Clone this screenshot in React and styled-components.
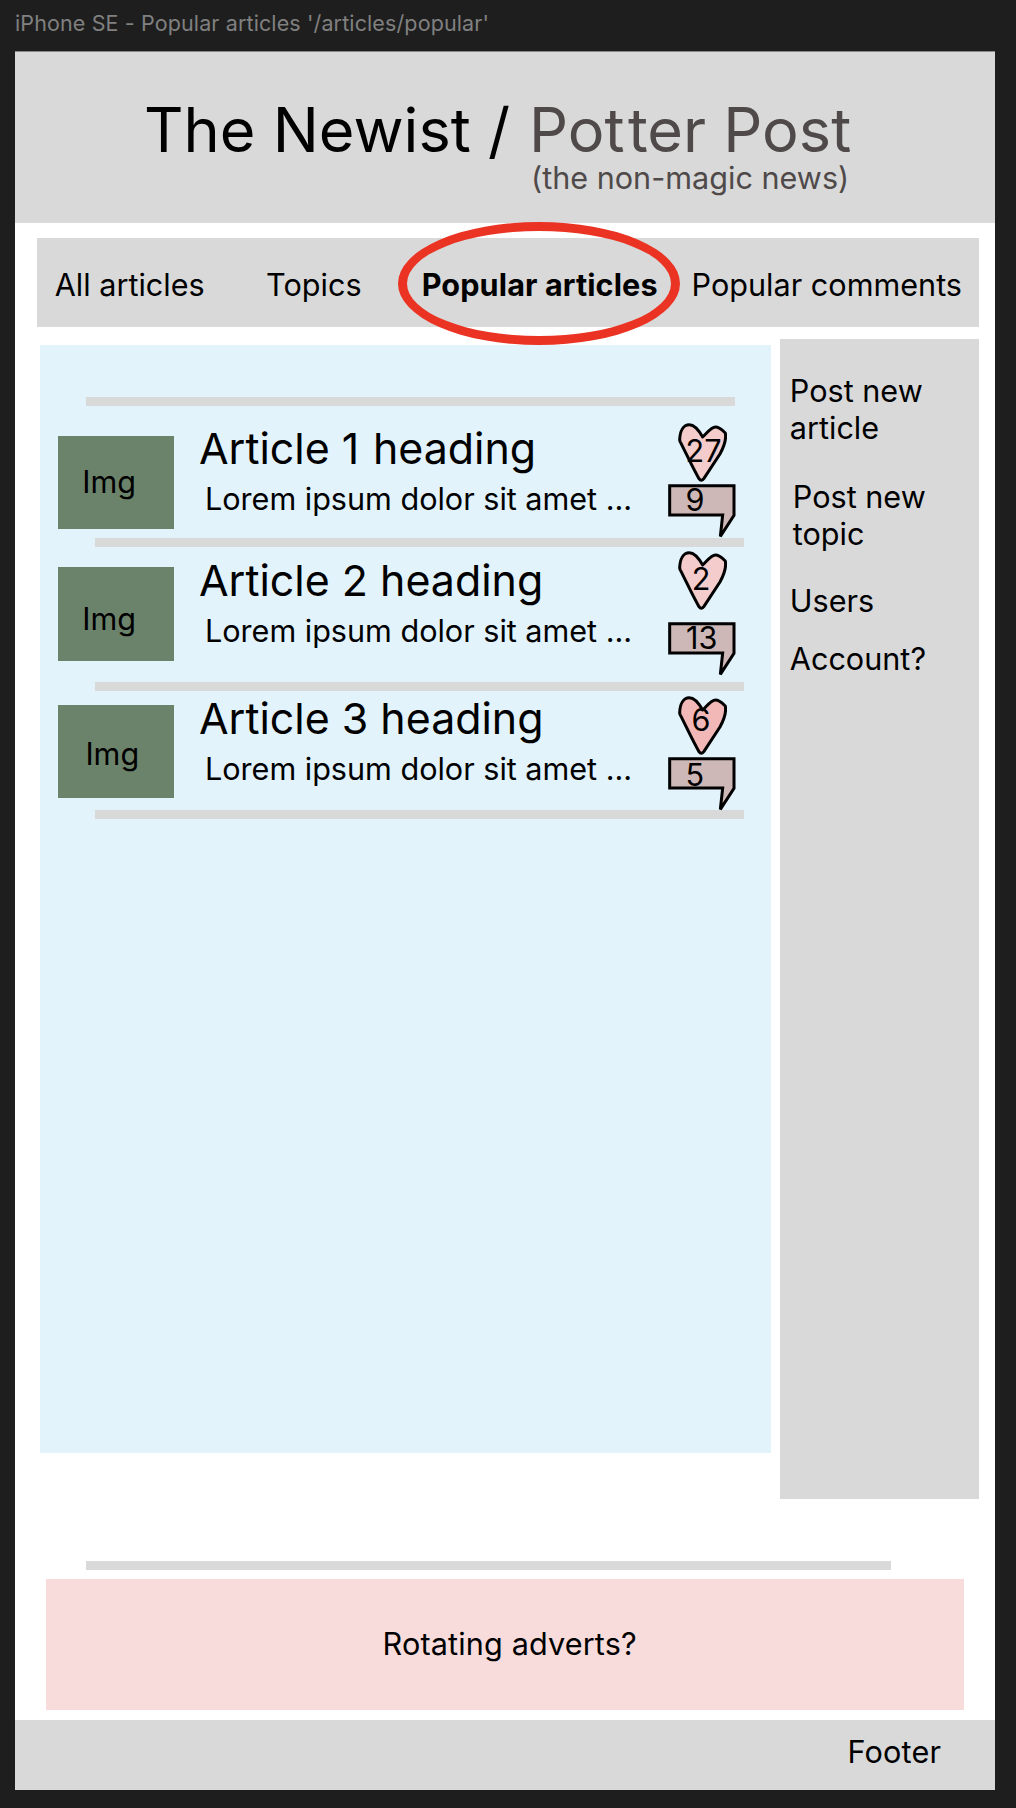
import React from "react";
import styled, { createGlobalStyle } from "styled-components";

const GlobalStyle = createGlobalStyle`
  * { box-sizing: border-box; }
  body {
    margin: 0;
    background: #1e1e1e;
    color: #000;
    font-family: Inter, "Liberation Sans", sans-serif;
    font-size: 30.6px;
    line-height: 37px;
    font-variant-ligatures: none;
  }
`;

const Canvas = styled.div`
  width: 1016px;
  height: 1808px;
  padding-left: 15px;
  overflow: hidden;
`;

const FrameLabel = styled.div`
  height: 51px;
  padding-top: 10px;
  font-size: 21.5px;
  line-height: 26px;
  letter-spacing: 0.12px;
  color: #808080;
  white-space: nowrap;
`;

const Frame = styled.div`
  display: flex;
  flex-direction: column;
  width: 980px;
  height: 1739px;
  background: #fff;
  box-shadow: inset 0 1px 0 #8a8a8a;
`;

const Header = styled.header`
  flex: none;
  height: 171.5px;
  margin-top: 0.5px;
  padding: 50px 0 0 129px;
  background: #d9d9d9;
`;

const Title = styled.h1`
  display: flex;
  margin: 0;
  font-size: 61.25px;
  line-height: 57px;
  font-weight: 400;
  white-space: pre;
`;

const AltTitle = styled.span`
  padding-left: 1.6px;
  color: #4f4a49;
`;

const Spaced = styled.span`
  letter-spacing: ${(p) => p.$by}px;
`;

const Tagline = styled.div`
  padding-left: 387px;
  color: #4f4a49;
`;

const Nav = styled.nav`
  flex: none;
  display: flex;
  height: 89px;
  margin: 15px 16px 0 21.7px;
  padding: 28px 0 0 18px;
  background: #d9d9d9;
  white-space: nowrap;
`;

const NavItem = styled.a`
  position: relative;
  flex: none;
  width: ${(p) => p.$width}px;
  font-weight: ${(p) => (p.$active ? 700 : 400)};
  letter-spacing: ${(p) => (p.$active ? "0.1px" : "0")};
`;

const ActiveRing = styled.span`
  position: absolute;
  left: -23.7px;
  top: -43.6px;
  width: 281.7px;
  height: 123px;
  border: 9.3px solid #eb3323;
  border-radius: 50%;
`;

const Body = styled.div`
  flex: none;
  display: flex;
  gap: 9px;
  height: 1160px;
  margin: 12px 16px 0 25px;
`;

const Feed = styled.main`
  width: 731px;
  height: 1108px;
  margin-top: 6px;
  padding-top: 52px;
  background: #e2f3fc;
`;

const Rule = styled.div`
  flex: none;
  width: ${(p) => p.$width}px;
  height: 9px;
  margin-top: ${(p) => p.$top || 0}px;
  margin-left: ${(p) => p.$indent}px;
  background: #d9d9d9;
`;

const ArticleRow = styled.article`
  display: flex;
  height: ${(p) => p.$height}px;
  padding-left: 18px;
`;

const Thumb = styled.div`
  flex: none;
  width: 116.4px;
  height: 93.5px;
  margin-top: ${(p) => p.$top}px;
  padding: ${(p) => p.$pad};
  background: #6c836b;
`;

const Summary = styled.div`
  width: 494.1px;
  padding: ${(p) => p.$top}px 0 0 24.6px;
  white-space: nowrap;
`;

const Heading = styled.h2`
  margin: 0 0 6px;
  font-size: 42.9px;
  line-height: 52px;
  font-weight: 400;
`;

const Excerpt = styled.p`
  margin: 0;
  padding-left: 6px;
  letter-spacing: -0.02px;
`;

const Stats = styled.div`
  display: flex;
  flex-direction: column;
  gap: ${(p) => p.$gap}px;
  padding-top: ${(p) => p.$top}px;
`;

const Stat = styled.div`
  position: relative;
  width: 68px;
  height: ${(p) => p.$height}px;

  svg {
    display: block;
    margin-left: ${(p) => p.$indent || 0}px;
  }
`;

const Count = styled.span`
  position: absolute;
  left: ${(p) => p.$x}px;
  top: ${(p) => p.$y}px;
`;

const Sidebar = styled.aside`
  display: flex;
  flex-direction: column;
  width: 199px;
  height: 1160px;
  padding: 33px 0 0 9.8px;
  background: #d9d9d9;
`;

const SideLink = styled.a`
  width: 150px;
  margin: 0 0 ${(p) => p.$after || 0}px ${(p) => p.$indent || 0}px;
`;

const Advert = styled.section`
  flex: none;
  height: 131.5px;
  margin: 9.3px 31px 0;
  padding: 46.6px 0 0 336.5px;
  letter-spacing: 0.15px;
  background: #f8dcdc;
`;

const Footer = styled.footer`
  flex: 1;
  margin-top: 9.2px;
  padding: 13.4px 0 0 832.6px;
  letter-spacing: 0.15px;
  background: #d9d9d9;
`;

const Heart = ({ fill }) => (
  <svg width="49.3" height="59" viewBox="114 68 148 177">
    <path
      d="M119 118C120 92 130 73 148 73C166 73 178 92 188 110C200 99 214 80 226 80C239 80 248 90 256 98C261 123 248 146 240 161L192 234C187 241 182 242 177 235C157 200 138 158 120 123Z"
      fill={fill}
      stroke="#000"
      strokeWidth="9"
      strokeLinejoin="round"
    />
  </svg>
);

const Bubble = () => (
  <svg width="67.7" height="54" viewBox="86 252 203 162">
    <path
      d="M91 257H284V346L243 409L250 345H91Z"
      fill="#ceb8b7"
      stroke="#000"
      strokeWidth="9"
      strokeLinejoin="miter"
      strokeMiterlimit="3"
    />
  </svg>
);

const articles = [
  { number: 1, numberSpacing: 1.6, height: 132, thumbTop: 29.7, imgPad: "27.4px 0 0 24.3px", textTop: 16.4,
    statsTop: 16.7, gap: 2.6, likes: 27, likesAt: [17, 9], fill: "#f3cccb", comments: 9, commentsAt: [17, -3.4] },
  { number: 2, numberSpacing: 0, height: 135, thumbTop: 20.3, imgPad: "33px 0 0 24.3px", textTop: 7.4,
    statsTop: 4.4, gap: 11.6, likes: 2, likesAt: [23.3, 8.6], fill: "#f3cccb", comments: 13, commentsAt: [17.6, -3.4] },
  { number: 3, numberSpacing: 0, height: 119.4, thumbTop: 13.8, imgPad: "30.4px 0 0 27.4px", textTop: 1.4,
    statsTop: 4.5, gap: 2.5, likes: 6, likesAt: [23, 5.6], fill: "#f2b8b8", comments: 5, commentsAt: [17, -1] },
];

export default function App() {
  return (
    <Canvas>
      <GlobalStyle />
      <FrameLabel>iPhone SE - Popular articles '/articles/popular'</FrameLabel>
      <Frame>
        <Header>
          <Title>
            <span>The Newist / </span>
            <AltTitle>
              Po<Spaced $by={3.4}>t</Spaced>ter Post
            </AltTitle>
          </Title>
          <Tagline>(the non-magic news)</Tagline>
        </Header>
        <Nav>
          <NavItem $width={211.4}>All articles</NavItem>
          <NavItem $width={155.6}>Topics</NavItem>
          <NavItem $width={269.9} $active>
            Popular articles
            <ActiveRing />
          </NavItem>
          <NavItem $width={270}>Popular comments</NavItem>
        </Nav>
        <Body>
          <Feed>
            <Rule $width={648.5} $indent={46} />
            {articles.map((a) => (
              <React.Fragment key={a.number}>
                <ArticleRow $height={a.height}>
                  <Thumb $top={a.thumbTop} $pad={a.imgPad}>Img</Thumb>
                  <Summary $top={a.textTop}>
                    <Heading>
                      Article <Spaced $by={a.numberSpacing}>{a.number}</Spaced> heading
                    </Heading>
                    <Excerpt>Lorem ipsum dolor sit amet ...</Excerpt>
                  </Summary>
                  <Stats $top={a.statsTop} $gap={a.gap}>
                    <Stat $height={59} $indent={9.3}>
                      <Heart fill={a.fill} />
                      <Count $x={a.likesAt[0]} $y={a.likesAt[1]}>{a.likes}</Count>
                    </Stat>
                    <Stat $height={54}>
                      <Bubble />
                      <Count $x={a.commentsAt[0]} $y={a.commentsAt[1]}>{a.comments}</Count>
                    </Stat>
                  </Stats>
                </ArticleRow>
                <Rule $width={649} $indent={55} />
              </React.Fragment>
            ))}
          </Feed>
          <Sidebar>
            <SideLink $after={32}>Post new article</SideLink>
            <SideLink $after={29.8} $indent={3}>Post new topic</SideLink>
            <SideLink $after={21}>Users</SideLink>
            <SideLink>Account?</SideLink>
          </Sidebar>
        </Body>
        <Rule $width={804.7} $indent={71} $top={61.6} />
        <Advert>Rotating adverts?</Advert>
        <Footer>Footer</Footer>
      </Frame>
    </Canvas>
  );
}
